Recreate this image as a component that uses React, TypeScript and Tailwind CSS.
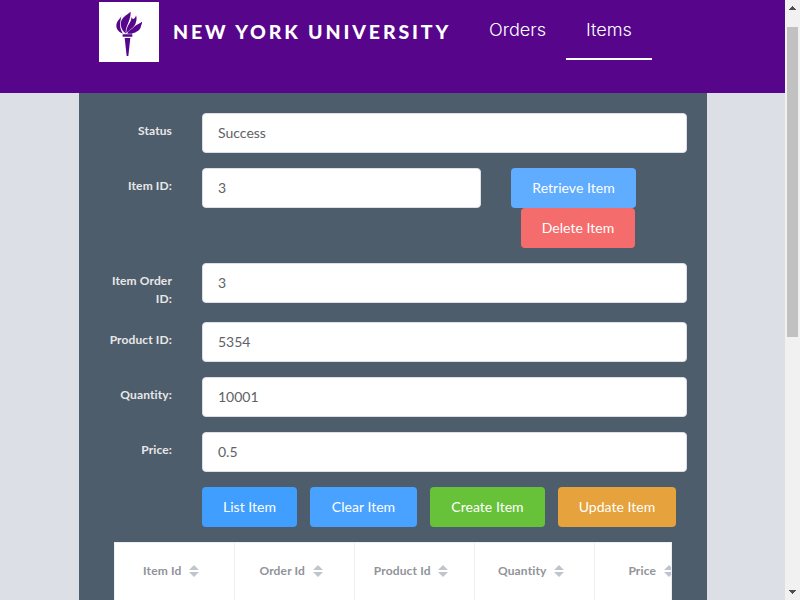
import type { ReactNode } from "react";

function Torch() {
  return (
    <svg viewBox="27 6 180 180" className="h-[60px] w-[60px] shrink-0 bg-white" fill="#57068c">
      <path d="M94 48C90 58 79 63 79 78C80 90 88 97 99 101C87 84 90 70 94 48Z" />
      <path d="M122 35C112 44 95 51 93 67C91 81 97 94 108 101C103 83 123 63 122 35Z" />
      <path d="M124 50C127 66 106 78 109 100C114 92 132 85 137 70C140 61 141 54 138 46C136 56 128 62 124 50Z" />
      <path d="M156 65C149 72 141 71 134 79C127 88 115 90 112 101H125C141 97 152 89 153 78C154 73 157 71 156 65Z" />
      <path d="M98 103H127V110H98ZM104 114H121L115 168H110Z" />
    </svg>
  );
}

function Row({ label, children, className = "mb-[15px]" }: { label: string; children: ReactNode; className?: string }) {
  return (
    <div className={`flex items-start ${className}`}>
      <label className="mt-[9px] w-[73px] shrink-0 text-right text-[12px] leading-[18px] font-bold tracking-[0.12px] text-[#e8e8e8]">{label}</label>
      <div className="ml-[30px] flex w-[485px] shrink-0">{children}</div>
    </div>
  );
}

function Field({ value, className = "w-full" }: { value: string; className?: string }) {
  return (
    <input
      readOnly
      value={value}
      className={`h-10 rounded-[4px] border border-[#dcdfe6] bg-white px-[15px] pb-[2px] text-[14px] text-[#606266] outline-none ${className}`}
    />
  );
}

function Button({ children, className }: { children: ReactNode; className: string }) {
  return (
    <button className={`h-10 shrink-0 rounded-[4px] text-center text-[14px] leading-none tracking-[0.03px] whitespace-nowrap text-white ${className}`}>
      {children}
    </button>
  );
}

function Heading({ children }: { children: ReactNode }) {
  return (
    <div className="flex h-full w-[120px] shrink-0 items-start justify-center border-r border-[#ebeef5] pt-4 text-[12px] leading-[23px] font-bold tracking-[0.15px] text-[#909399]">
      <span>{children}</span>
      <svg viewBox="0 0 10 12" className="mt-[6px] mr-[7px] ml-[7.5px] h-3 w-[10px]" fill="#c0c4cc">
        <path d="M0 5L5 0L10 5ZM0 7H10L5 12Z" />
      </svg>
    </div>
  );
}

export default function App() {
  return (
    <div className="flex h-[600px] w-[800px] overflow-hidden bg-[#dcdfe6] font-['Lato',sans-serif]">
      <div className="flex w-[785px] flex-col">
        <header className="flex h-[93px] shrink-0 items-start bg-[#57068c] pl-[99px] text-white">
          <div className="mt-[2px] flex w-[370px] items-start">
            <Torch />
            <span className="mt-[17px] ml-[14px] text-[19.5px] leading-[26px] font-black tracking-[2.87px] whitespace-nowrap">
              NEW YORK UNIVERSITY
            </span>
          </div>
          <nav className="flex h-[60px] font-['Inter',sans-serif] text-[17px] leading-[60px] font-light">
            <a className="w-[97px] pl-5">
              <span className="inline-block origin-left scale-x-[1.065]">Orders</span>
            </a>
            <a className="w-[86px] border-b-2 border-white pl-5">
              <span className="inline-block origin-left scale-x-[1.065]">Items</span>
            </a>
          </nav>
        </header>
        <main className="ml-[79px] h-[507px] w-[628px] overflow-hidden bg-[#4e5d6c] pt-5 pl-5">
          <Row label="Status"><Field value="Success" /></Row>
          <Row label="Item ID:">
            <Field value="3" className="w-[279px]" />
            <div className="ml-[30px] flex flex-col">
              <Button className="w-[125px] bg-[#60acff]">Retrieve Item</Button>
              <Button className="ml-[10px] w-[114px] bg-[#f56c6c]">Delete Item</Button>
            </div>
          </Row>
          <Row label="Item Order ID:" className="mb-[14px]"><Field value="3" /></Row>
          <Row label="Product ID:"><Field value="5354" /></Row>
          <Row label="Quantity:"><Field value="10001" /></Row>
          <Row label="Price:"><Field value="0.5" /></Row>
          <div className="ml-[103px] flex gap-[13px]">
            <Button className="w-[95px] bg-[#409eff]">List Item</Button>
            <Button className="w-[107px] bg-[#49a2ff]">Clear Item</Button>
            <Button className="w-[115px] bg-[#67c23a]">Create Item</Button>
            <Button className="w-[118px] bg-[#e6a23c]">Update Item</Button>
          </div>
          <div className="mt-[15px] ml-[15px] flex h-[80px] w-[558px] overflow-hidden border border-[#ebeef5] bg-white">
            <Heading>Item Id</Heading>
            <Heading>Order Id</Heading>
            <Heading>Product Id</Heading>
            <Heading>Quantity</Heading>
            <Heading>Price</Heading>
          </div>
        </main>
      </div>
      <div className="flex w-[15px] flex-col items-center bg-[#f1f1f1]">
        <svg viewBox="0 0 15 27" className="h-[27px] w-[15px]" fill="#505050" shapeRendering="crispEdges">
          <path d="M4 10L7.5 6L11 10Z" />
        </svg>
        <div className="h-[310px] w-[11px] bg-[#c1c1c1]" />
        <svg viewBox="0 0 15 15" className="mt-auto h-[15px] w-[15px]" fill="#505050" shapeRendering="crispEdges">
          <path d="M4 5H11L7.5 9Z" />
        </svg>
      </div>
    </div>
  );
}
